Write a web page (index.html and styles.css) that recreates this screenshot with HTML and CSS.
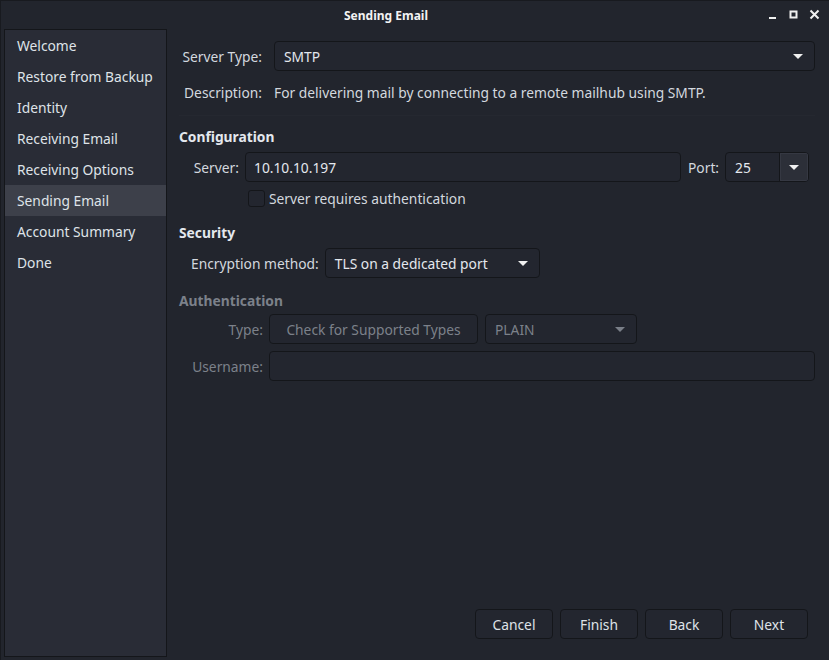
FILE: index.html
```html
<!DOCTYPE html>
<html>
<head>
<meta charset="utf-8">
<link rel="stylesheet" href="styles.css">
</head>
<body>
<div class="window">
  <div class="titlebar">
    <div class="title">Sending Email</div>
    <div class="controls">
      <svg class="ctl" width="12" height="12" viewBox="0 0 12 12"><rect x="2" y="8" width="7" height="2" fill="#f0f0f0"/></svg>
      <svg class="ctl" width="12" height="12" viewBox="0 0 12 12"><rect x="2.5" y="2.5" width="6" height="6" fill="none" stroke="#f0f0f0" stroke-width="2"/></svg>
      <svg class="ctl" width="12" height="12" viewBox="0 0 12 12"><path d="M1.5 1.5 L9.5 9.5 M9.5 1.5 L1.5 9.5" stroke="#f0f0f0" stroke-width="2"/></svg>
    </div>
  </div>
  <div class="body">
    <div class="sidebar">
      <div class="item">Welcome</div>
      <div class="item">Restore from Backup</div>
      <div class="item">Identity</div>
      <div class="item">Receiving Email</div>
      <div class="item">Receiving Options</div>
      <div class="item selected">Sending Email</div>
      <div class="item">Account Summary</div>
      <div class="item">Done</div>
    </div>
    <div class="main">
      <div class="row r-type">
        <div class="label lab-top">Server Type:</div>
        <div class="combo wide"><span>SMTP</span><span class="arrow"></span></div>
      </div>
      <div class="row r-desc">
        <div class="label lab-top">Description:</div>
        <div class="desc">For delivering mail by connecting to a remote mailhub using SMTP.</div>
      </div>
      <div class="sep"></div>
      <div class="heading h-config">Configuration</div>
      <div class="row r-server indent">
        <div class="label lab-server">Server:</div>
        <div class="entry server">10.10.10.197</div>
        <div class="label lab-port">Port:</div>
        <div class="spin"><span class="spin-text">25</span><span class="spin-btn"><span class="arrow"></span></span></div>
      </div>
      <div class="row r-check">
        <span class="checkbox"></span>
        <span>Server requires authentication</span>
      </div>
      <div class="heading h-security">Security</div>
      <div class="row r-enc indent">
        <div class="label">Encryption method:</div>
        <div class="combo enc"><span>TLS on a dedicated port</span><span class="arrow"></span></div>
      </div>
      <div class="heading h-auth disabled">Authentication</div>
      <div class="row r-authtype indent">
        <div class="label lab-auth disabled">Type:</div>
        <div class="btn check disabled">Check for Supported Types</div>
        <div class="combo plain disabled"><span>PLAIN</span><span class="arrow dim"></span></div>
      </div>
      <div class="row r-user indent">
        <div class="label lab-auth disabled">Username:</div>
        <div class="entry user"></div>
      </div>
      <div class="spacer"></div>
      <div class="buttons">
        <div class="btn act">Cancel</div>
        <div class="btn act">Finish</div>
        <div class="btn act">Back</div>
        <div class="btn act">Next</div>
      </div>
    </div>
  </div>
</div>
</body>
</html>
```

FILE: styles.css
```css
* { box-sizing: border-box; }
html, body {
  margin: 0;
  padding: 0;
  background: #22252d;
}
body {
  font-family: "Noto Sans", "Open Sans", sans-serif;
  font-size: 13.8px;
  color: #d3d8df;
}
.window {
  width: 829px;
  height: 660px;
  display: flex;
  flex-direction: column;
  background: #22252d;
  border-top: 1px solid #181a1f;
  border-left: 1px solid #181a1f;
}
.titlebar {
  height: 28px;
  display: flex;
  align-items: center;
  justify-content: center;
  position: relative;
  flex: none;
}
.title {
  font-size: 12px;
  font-weight: bold;
  color: #f2f2f2;
  margin-left: -58px;
}
.controls {
  position: absolute;
  right: 8px;
  top: 8px;
  display: flex;
  gap: 9px;
}
.body {
  flex: 1;
  display: flex;
  padding: 0 0 3px 3px;
  min-height: 0;
}
.sidebar {
  width: 163px;
  flex: none;
  background: #292c36;
  border: 1px solid #14161a;
}
.item {
  height: 31px;
  line-height: 31px;
  padding-left: 12px;
  color: #dfe3e8;
  white-space: nowrap;
}
.item.selected {
  background: #3d404a;
}
.main {
  flex: 1;
  display: flex;
  flex-direction: column;
  padding: 12px 14px 18px 12px;
}
.row {
  display: flex;
  align-items: center;
}
.label {
  white-space: nowrap;
}
.lab-top {
  width: 83px;
  text-align: right;
  margin-right: 12px;
}
.indent { padding-left: 12px; }
.combo, .entry, .btn, .spin {
  height: 30px;
  border: 1px solid #14161a;
  border-radius: 4px;
  background: #23262f;
}
.combo {
  display: flex;
  align-items: center;
  justify-content: space-between;
  padding: 0 11px 0 9px;
  color: #e4e8ee;
}
.combo.wide { flex: 1; }
.arrow {
  width: 0;
  height: 0;
  border-left: 5px solid transparent;
  border-right: 5px solid transparent;
  border-top: 5px solid #f0f0f0;
}
.arrow.dim { border-top-color: #7a7f88; }
.r-desc {
  margin-top: 9px;
  height: 25px;
}
.desc { color: #d3d8df; }
.sep {
  height: 1px;
  background: #252830;
  margin-top: 10px;
}
.heading {
  font-weight: bold;
  color: #e4e8ee;
  height: 20px;
  line-height: 20px;
}
.h-config { margin-top: 11px; }
.r-server { margin-top: 5px; }
.lab-server {
  width: 48px;
  text-align: right;
  margin-right: 6px;
}
.entry {
  display: flex;
  align-items: center;
  padding-left: 8px;
  color: #e4e8ee;
}
.entry.server { width: 436px; }
.lab-port { margin: 0 6px 0 7px; }
.spin {
  width: 84px;
  display: flex;
  overflow: hidden;
}
.spin-text {
  flex: 1;
  display: flex;
  align-items: center;
  padding-left: 9px;
  color: #e4e8ee;
}
.spin-btn {
  width: 29px;
  background: #2c2f38;
  border-left: 1px solid #14161a;
  box-shadow: inset 0 0 0 1px #353842;
  display: flex;
  align-items: center;
  justify-content: center;
}
.r-check {
  margin-top: 7px;
  padding-left: 69px;
  height: 18px;
}
.checkbox {
  width: 17px;
  height: 17px;
  border: 1px solid #14161a;
  border-radius: 3px;
  background: #23262f;
  margin-right: 4px;
}
.h-security { margin-top: 16px; }
.r-enc { margin-top: 5px; }
.r-enc .label { margin-right: 6px; }
.combo.enc { width: 215px; }
.h-auth { margin-top: 13px; }
.disabled { color: #7c818a !important; }
.r-authtype { margin-top: 3px; }
.lab-auth {
  width: 72px;
  text-align: right;
  margin-right: 6px;
}
.btn {
  display: flex;
  align-items: center;
  justify-content: center;
  color: #dfe3e8;
}
.btn.check { width: 209px; }
.combo.plain { width: 152px; margin-left: 7px; }
.r-user { margin-top: 7px; }
.entry.user { flex: 1; }
.spacer { flex: 1; }
.buttons {
  display: flex;
  justify-content: flex-end;
  gap: 7px;
  padding-right: 7px;
}
.btn.act {
  width: 78px;
  color: #dfe3e8;
}
```
